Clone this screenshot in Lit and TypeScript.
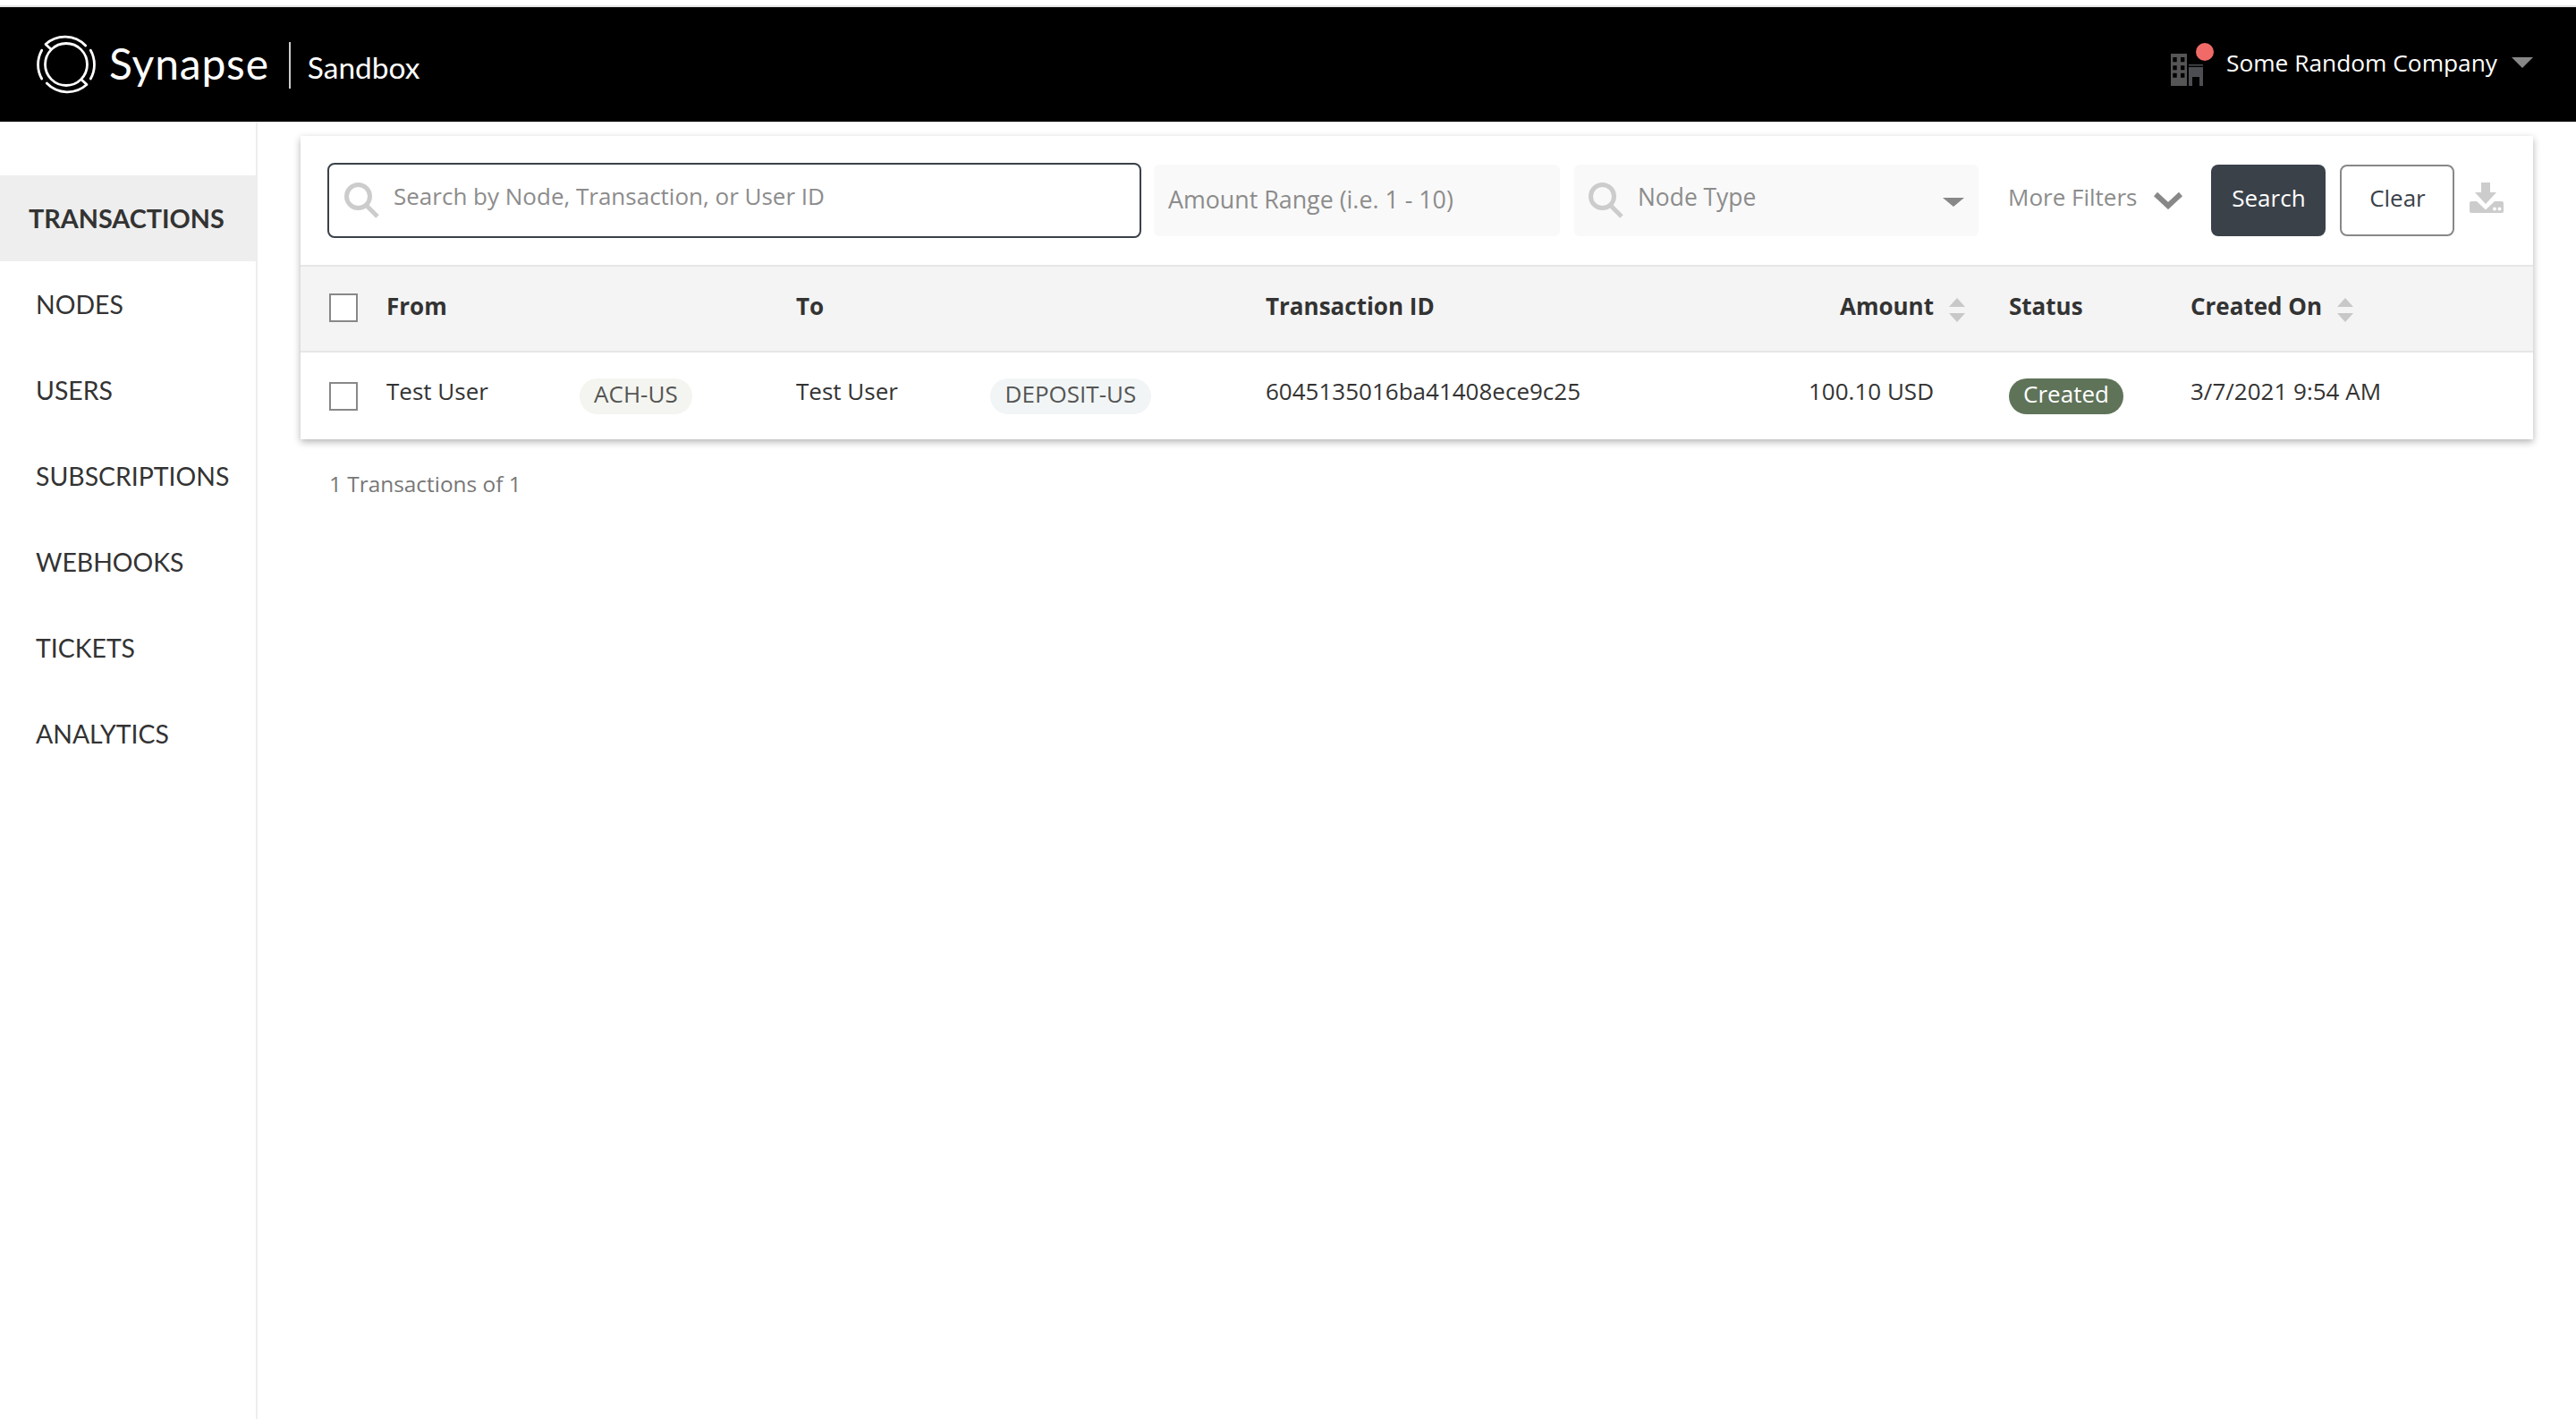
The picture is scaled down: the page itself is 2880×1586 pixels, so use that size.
import { LitElement, html, css } from "lit";
import { customElement } from "lit/decorators.js";

const searchIcon = html`<svg class="sicon" viewBox="0 0 40 40" fill="none" stroke="#ccc"><circle cx="15.5" cy="15.5" r="13" stroke-width="5"/><path d="M25 26l12 12" stroke-width="5"/></svg>`;
const sortIcon = html`<svg class="sort" viewBox="0 0 18 28" fill="#c8c8c8"><path d="M9 0l9 10H0z"/><path d="M0 17h18l-9 10z"/></svg>`;

@customElement("app-root")
export class AppRoot extends LitElement {
  static styles = css`
    :host { display: block; width: 2880px; height: 1586px; background: #fff; font-family: "Open Sans", sans-serif; color: #333; overflow: hidden; }
    .page { display: flex; flex-direction: column; height: 100%; }
    .topline { height: 6px; background: #fff; border-bottom: 2px solid #e4e4e4; }
    header { height: 128px; background: #000; color: #fff; display: flex; align-items: center; padding: 0 48px 0 40px; flex: none; }
    .logo { width: 68px; height: 68px; flex: none; }
    .word { font-family: Lato, sans-serif; font-weight: 400; font-size: 48px; margin-left: 14px; line-height: 1; letter-spacing: .8px; margin-top: -2px; }
    .sep { width: 2px; height: 52px; background: #ccc; margin-left: 22px; margin-top: 2px; }
    .env { font-family: Lato, sans-serif; font-size: 33.5px; margin-left: 19px; margin-top: 6px; }
    .spacer { flex: 1; }
    .bldg { position: relative; width: 48px; height: 48px; flex: none; }
    .bldg svg { display: block; width: 36px; height: 36px; position: absolute; left: 0; bottom: 0; }
    .dot { position: absolute; width: 20px; height: 20px; border-radius: 50%; background: #f06b68; left: 28px; top: 0; }
    .company { font-size: 26.3px; margin-left: 14px; margin-top: -4px; }
    .caret { width: 0; height: 0; border-left: 12px solid transparent; border-right: 12px solid transparent; border-top: 12px solid #888; margin-left: 16px; margin-top: -4px; }
    .body { flex: 1; display: flex; min-height: 0; }
    aside { width: 286px; border-right: 2px solid #eee; padding-top: 60px; flex: none; }
    .nav { height: 96px; box-sizing: border-box; display: flex; align-items: center; padding-left: 40px; padding-bottom: 1px; font-family: Lato, sans-serif; font-size: 28.4px; color: #333; }
    .nav.active { background: #eee; font-weight: 700; padding-left: 32px; padding-bottom: 0; font-size: 28.8px; }
    main { flex: 1; padding: 16px 48px 0 48px; min-width: 0; }
    .card { background: #fff; box-shadow: 0 3px 8px rgba(0,0,0,.3); }
    .toolbar { box-sizing: border-box; padding: 30px 33px 0 30px; display: flex; align-items: flex-start; border-bottom: 2px solid #e6e6e6; height: 146px; }
    .search { width: 910px; height: 84px; box-sizing: border-box; border: 2px solid #3a4149; border-radius: 8px; display: flex; align-items: center; padding-left: 17px; flex: none; }
    .sicon { width: 40px; height: 40px; flex: none; }
    .ph { font-size: 26px; color: #8c8c8c; white-space: nowrap; }
    .search .ph { margin-left: 15px; margin-top: -10px; }
    .amount { width: 454px; height: 80px; margin: 2px 0 0 14px; background: #f9f9f9; border-radius: 6px; display: flex; align-items: center; padding-left: 16px; box-sizing: border-box; flex: none; }
    .amount .ph { font-size: 26.8px; margin-top: -4px; }
    .node { width: 452px; height: 80px; margin: 2px 0 0 16px; background: #f9f9f9; border-radius: 6px; display: flex; align-items: center; padding: 0 16px; box-sizing: border-box; flex: none; }
    .node .ph { margin-left: 15px; margin-top: -8px; flex: 1; font-size: 26.4px; }
    .nodecaret { width: 0; height: 0; border-left: 12px solid transparent; border-right: 12px solid transparent; border-top: 10px solid #888; margin-top: 4px; }
    .more { display: flex; align-items: center; height: 80px; margin: 2px 0 0 34px; flex: none; }
    .more .ph { margin-top: -8px; margin-left: -1px; }
    .more svg { width: 32px; height: 20px; margin-left: 19px; margin-top: 0; }
    .btn { height: 80px; width: 128px; border-radius: 8px; box-sizing: border-box; display: flex; align-items: center; justify-content: center; font-size: 26px; margin-top: 2px; flex: none; padding-bottom: 7px; }
    .btn.dark { background: #3a4149; color: #fff; margin-left: 32px; }
    .btn.light { border: 2px solid #888; color: #3a4149; margin-left: 16px; }
    .dl { width: 38px; height: 34px; margin: 22px 0 0 17px; flex: none; }
    .thead, .trow { display: grid; grid-template-columns: 96px 458px 525px 605px 226px 203px 1fr; align-items: center; }
    .thead { height: 96px; box-sizing: border-box; background: #f4f4f4; border-bottom: 2px solid #e6e6e6; font-weight: 700; font-size: 26px; color: #333; }
    .trow { height: 97px; font-size: 26px; color: #333; }
    .check { width: 32px; height: 32px; box-sizing: border-box; border: 2px solid #888; background: #fff; margin-left: 32px; }
    .thead .check { margin-top: -3px; }
    .cell { display: flex; align-items: center; white-space: nowrap; }
    .thead .cell { margin-top: -7px; }
    .name { margin-top: -11px; }
    .pill { height: 40px; border-radius: 20px; display: inline-flex; align-items: center; justify-content: center; color: #555; font-size: 26px; padding-bottom: 5px; box-sizing: border-box; }
    .pill.a { background: #f4f5f0; width: 126px; margin-left: 102px; }
    .pill.b { background: #f2f5f6; width: 180px; margin-left: 103px; }
    .pill.c { background: #5f7359; color: #fff; width: 128px; }
    .sort { width: 18px; height: 28px; margin-left: 17px; margin-top: 10px; flex: none; }
    .thead .right { justify-content: flex-end; padding-right: 49px; }
    .trow .right { justify-content: flex-end; padding-right: 84px; }
    .count { font-size: 24.4px; color: #777; margin: 33px 0 0 32px; }
  `;

  render() {
    const nav = ["TRANSACTIONS", "NODES", "USERS", "SUBSCRIPTIONS", "WEBHOOKS", "TICKETS", "ANALYTICS"];
    return html`<div class="page">
      <div class="topline"></div>
      <header>
        <svg class="logo" viewBox="0 0 68 68" fill="none" stroke="#fff" stroke-width="2.800" stroke-linecap="round" stroke-linejoin="round">
          <circle cx="34" cy="34" r="23.500"/>
          <path d="M17 17L11 11.500A32.200 32.200 0 0 1 55.700 13"/>
          <path d="M51 51L57 56.500A32.200 32.200 0 0 1 12.300 55"/>
          <path d="M6.700 18.300A32.200 32.200 0 0 0 6.700 50"/>
          <path d="M61.300 18.300A32.200 32.200 0 0 1 61.300 50"/>
        </svg>
        <span class="word">Synapse</span>
        <span class="sep"></span>
        <span class="env">Sandbox</span>
        <span class="spacer"></span>
        <div class="bldg">
          <svg viewBox="0 0 36 36">
            <path fill="#555" fill-rule="evenodd" d="M0 0h18v36H0zM2.300 4v5.300h4.400V4zm8.700 0v5.300h4.400V4zM2.300 13.300v5h4.400v-5zm8.700 0v5h4.400v-5zM2.300 21.700v5h4.400v-5zm8.700 0v5h4.400v-5z"/>
            <path fill="#4c4e52" d="M20 12h16v1.500H20z"/>
            <path fill="#4c4e52" d="M20 15h16v21h-4V26h-8v10h-4z"/>
          </svg>
          <span class="dot"></span>
        </div>
        <span class="company">Some Random Company</span>
        <span class="caret"></span>
      </header>
      <div class="body">
        <aside>
          ${nav.map((n, i) => html`<div class="nav ${i === 0 ? "active" : ""}">${n}</div>`)}
        </aside>
        <main>
          <div class="card">
            <div class="toolbar">
              <div class="search">${searchIcon}<span class="ph">Search by Node, Transaction, or User ID</span></div>
              <div class="amount"><span class="ph">Amount Range (i.e. 1 - 10)</span></div>
              <div class="node">${searchIcon}<span class="ph">Node Type</span><span class="nodecaret"></span></div>
              <div class="more"><span class="ph">More Filters</span>
                <svg viewBox="0 0 32 20" fill="none" stroke="#888" stroke-width="6"><path d="M2 3l14 13L30 3"/></svg>
              </div>
              <div class="btn dark">Search</div>
              <div class="btn light">Clear</div>
              <svg class="dl" viewBox="0 0 38 34" fill="#ccc">
                <path d="M13 0h10v11h7L18 24 6 11h7z"/>
                <path fill-rule="evenodd" d="M2 21h6l10 9.500 10-9.500h8a2 2 0 0 1 2 2v9a2 2 0 0 1-2 2H2a2 2 0 0 1-2-2v-9a2 2 0 0 1 2-2zM26 29.500a2 2 0 1 0 4 0a2 2 0 1 0-4 0zM31.500 29.500a2 2 0 1 0 4 0a2 2 0 1 0-4 0z"/>
              </svg>
            </div>
            <div class="thead">
              <div class="check"></div>
              <div class="cell">From</div>
              <div class="cell">To</div>
              <div class="cell">Transaction ID</div>
              <div class="cell right">Amount${sortIcon}</div>
              <div class="cell">Status</div>
              <div class="cell">Created On${sortIcon}</div>
            </div>
            <div class="trow">
              <div class="check"></div>
              <div class="cell"><span class="name">Test User</span><span class="pill a">ACH-US</span></div>
              <div class="cell"><span class="name">Test User</span><span class="pill b">DEPOSIT-US</span></div>
              <div class="cell"><span class="name">6045135016ba41408ece9c25</span></div>
              <div class="cell right"><span class="name">100.10 USD</span></div>
              <div class="cell"><span class="pill c">Created</span></div>
              <div class="cell"><span class="name">3/7/2021 9:54 AM</span></div>
            </div>
          </div>
          <div class="count">1 Transactions of 1</div>
        </main>
      </div>
    </div>`;
  }
}
